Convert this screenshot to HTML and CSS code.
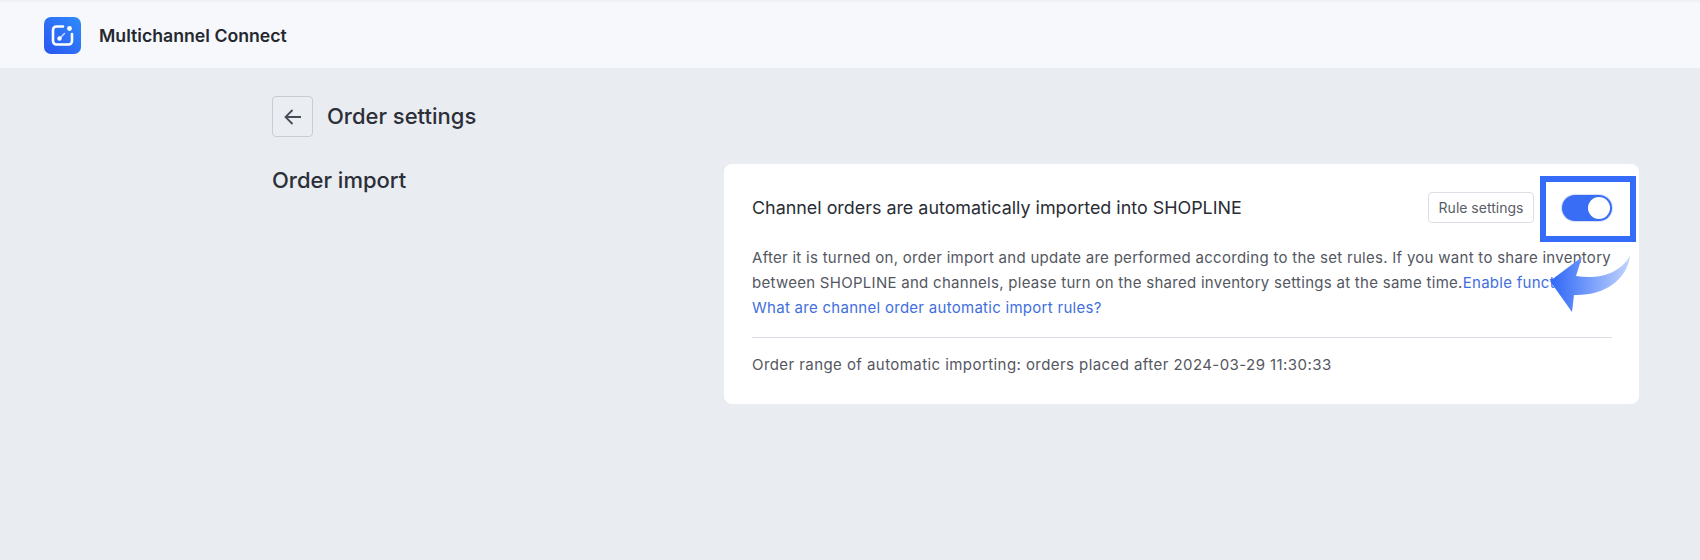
FILE: index.html
```html
<!DOCTYPE html>
<html lang="en">
<head>
<meta charset="utf-8">
<title>Order settings</title>
<link rel="stylesheet" href="styles.css">
</head>
<body>
<header class="topbar">
  <svg class="logo" width="37" height="37" viewBox="0 0 37 37" aria-hidden="true">
    <defs>
      <linearGradient id="lg" x1="0" y1="1" x2="1" y2="0">
        <stop offset="0" stop-color="#2a55f2"/>
        <stop offset="1" stop-color="#2f8cfb"/>
      </linearGradient>
    </defs>
    <rect width="37" height="37" rx="7" fill="url(#lg)"/>
    <path d="M19 9.500H12.500a3.500 3.500 0 0 0-3.500 3.500v11a3.500 3.500 0 0 0 3.500 3.500h12a3.500 3.500 0 0 0 3.500-3.500v-7" fill="none" stroke="#fff" stroke-width="2.600" stroke-linecap="round"/>
    <circle cx="25.500" cy="11.500" r="2.400" fill="#fff"/>
    <path d="M15.500 21.500l5-5" stroke="#fff" stroke-width="1.600" stroke-linecap="round" opacity=".7"/>
    <circle cx="15.500" cy="21.500" r="2.200" fill="#fff"/>
  </svg>
  <span class="brand">Multichannel Connect</span>
</header>
<main class="page">
  <div class="page-head">
    <button class="back" type="button" aria-label="Back">
      <svg width="20" height="20" viewBox="0 0 20 20" aria-hidden="true">
        <path d="M18 10H2.500M9.500 3l-7 7 7 7" fill="none" stroke="#474c59" stroke-width="1.800"/>
      </svg>
    </button>
    <h1 class="page-title">Order settings</h1>
  </div>
  <div class="section">
    <h2 class="section-title">Order import</h2>
    <section class="card">
      <div class="card-head">
        <h3 class="card-title">Channel orders are automatically imported into SHOPLINE</h3>
        <div class="card-actions">
          <button class="rule-btn" type="button">Rule settings</button>
          <span class="switch"><span class="knob"></span></span>
        </div>
      </div>
      <p class="desc">After it is turned on, order import and update are performed according to the set rules. If you want to share inventory between SHOPLINE and channels, please turn on the shared inventory settings at the same time.<a class="link" href="#">Enable function</a><br><a class="link" href="#">What are channel order automatic import rules?</a></p>
      <hr class="divider">
      <p class="range">Order range of automatic importing: orders placed after 2024-03-29 11:30:33</p>
    </section>
  </div>
</main>
<div class="highlight"></div>
<svg class="arrow" width="84" height="60" viewBox="0 0 84 60" aria-hidden="true">
  <defs>
    <linearGradient id="ag" x1="0" y1="0" x2="1" y2="0">
      <stop offset="0" stop-color="#2e66f6"/>
      <stop offset=".45" stop-color="#6f98fa"/>
      <stop offset="1" stop-color="#c2d4fe"/>
    </linearGradient>
  </defs>
  <path d="M1 26L33 2 27 21C47 24 69 21 81 1 78 25 55 41 25 40L23 57Z" fill="url(#ag)"/>
</svg>
</body>
</html>
```
FILE: styles.css
```css
* {
  box-sizing: border-box;
}

html,
body {
  margin: 0;
  height: 560px;
  overflow: hidden;
}

body {
  position: relative;
  background: #e9ecf1;
  font-family: Inter, "Liberation Sans", sans-serif;
  color: #24272f;
}

.topbar {
  height: 68px;
  padding: 0 0 0 44px;
  display: flex;
  align-items: center;
  gap: 18px;
  background: #f6f8fc;
  border-top: 2px solid #f0f1f5;
}

.logo {
  flex: none;
}

.brand {
  font-size: 17.700px;
  font-weight: 600;
  color: #25282f;
}

.page {
  padding: 28px 61px 0 272px;
}

.page-head {
  display: flex;
  align-items: center;
  gap: 14px;
  height: 41px;
}

.back {
  width: 41px;
  height: 41px;
  padding: 0;
  display: flex;
  align-items: center;
  justify-content: center;
  background: #eaedf2;
  border: 1px solid #c9ccd4;
  border-radius: 4px;
}

.page-title {
  margin: 0;
  padding-bottom: 2px;
  font-size: 22px;
  font-weight: 500;
  color: #2c2f38;
}

.section {
  margin-top: 27px;
  display: grid;
  grid-template-columns: 452px 915px;
}

.section-title {
  margin: 0;
  padding-top: 4px;
  font-size: 22px;
  line-height: 24px;
  font-weight: 500;
  color: #2c2f38;
}

.card {
  height: 240px;
  padding: 28px 27px 0 28px;
  background: #fff;
  border-radius: 8px;
}

.card-head {
  display: flex;
  align-items: center;
  justify-content: space-between;
  height: 31px;
}

.card-title {
  margin: 0;
  font-size: 17.900px;
  font-weight: 400;
  color: #2a2d35;
}

.card-actions {
  display: flex;
  align-items: center;
  gap: 28px;
}

.rule-btn {
  width: 106px;
  height: 31px;
  padding: 0;
  background: #fff;
  border: 1px solid #dcdfe5;
  border-radius: 4px;
  font: 400 14px Inter, "Liberation Sans", sans-serif;
  color: #5a5e68;
}

.switch {
  width: 50px;
  height: 26px;
  padding: 2px;
  display: flex;
  justify-content: flex-end;
  background: #3a6df5;
  border-radius: 13px;
  box-shadow: 0 0 0 1px #d6e0fb;
}

.knob {
  width: 22px;
  height: 22px;
  background: #fff;
  border-radius: 50%;
}

.desc {
  margin: 22px 0 0;
  font-size: 15px;
  line-height: 25px;
  letter-spacing: 0.280px;
  color: #54575f;
}

.link {
  color: #3f6fdd;
  text-decoration: none;
}

.divider {
  margin: 17px 0 0;
  border: 0;
  border-top: 1px solid #dcdfe5;
}

.range {
  margin: 14px 0 0;
  font-size: 15px;
  line-height: 25px;
  letter-spacing: 0.430px;
  color: #54575f;
}

.highlight {
  position: absolute;
  left: 1540px;
  top: 176px;
  width: 96px;
  height: 66px;
  border: 6px solid #346bf8;
}

.arrow {
  position: absolute;
  left: 1549px;
  top: 255px;
}
```
